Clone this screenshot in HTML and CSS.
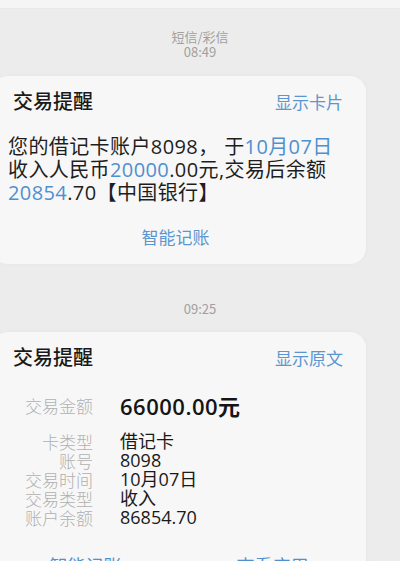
FILE: index.html
```html
<!DOCTYPE html>
<html lang="zh-CN">
<head>
<meta charset="utf-8">
<link rel="stylesheet" href="styles.css">
</head>
<body>
<div class="topbar"></div>
<div class="stamp stamp-first">
  <div>短信/彩信</div>
  <div>08:49</div>
</div>
<section class="card card-first">
  <header class="card-head">
    <h2 class="card-title">交易提醒</h2>
    <span class="card-link">显示卡片</span>
  </header>
  <p class="msg">您的借记卡账户8098， 于<span class="hl">10月07日</span><br>收入人民币<span class="hl">20000</span>.00元,交易后余额<br><span class="hl">20854</span>.70【中国银行】</p>
  <div class="single-action">智能记账</div>
</section>
<div class="stamp stamp-second">
  <div>09:25</div>
</div>
<section class="card card-second">
  <header class="card-head">
    <h2 class="card-title">交易提醒</h2>
    <span class="card-link">显示原文</span>
  </header>
  <div class="amount-row">
    <span class="label">交易金额</span>
    <span class="amount">66000.00元</span>
  </div>
  <dl class="details">
    <dt class="label">卡类型</dt><dd class="value">借记卡</dd>
    <dt class="label">账号</dt><dd class="value">8098</dd>
    <dt class="label">交易时间</dt><dd class="value">10月07日</dd>
    <dt class="label">交易类型</dt><dd class="value">收入</dd>
    <dt class="label">账户余额</dt><dd class="value">86854.70</dd>
  </dl>
  <div class="actions">
    <span class="action">智能记账</span>
    <span class="action">查看应用</span>
  </div>
</section>
</body>
</html>
```
FILE: styles.css
```css
html, body {
  margin: 0;
  padding: 0;
}
body {
  width: 400px;
  height: 561px;
  overflow: hidden;
  background: #ececec;
  font-family: "Noto Sans CJK SC", "Noto Sans", sans-serif;
  color: #1e1e1e;
}
.topbar {
  height: 8px;
  background: #f5f5f5;
  border-bottom: 1px solid #e8e8e8;
}
.stamp {
  text-align: center;
  font-size: 13px;
  line-height: 15px;
  color: #a0a0a0;
}
.stamp-first {
  margin-top: 20px;
}
.stamp-second {
  margin-top: 37px;
}
.card {
  margin-left: -8px;
  width: 374px;
  background: #f7f7f7;
  border-radius: 16px;
  box-shadow: 0 0 4px rgba(0, 0, 0, 0.03);
  box-sizing: border-box;
  padding: 13px 23px 0 16px;
}
.card-first {
  margin-top: 17px;
  height: 188px;
}
.card-second {
  margin-top: 16px;
  height: 260px;
}
.card-head {
  display: flex;
  justify-content: space-between;
  align-items: center;
  height: 24px;
}
.card-title {
  margin: 0 0 0 5px;
  font-size: 20px;
  font-weight: 500;
  line-height: 24px;
  color: #1a1a1a;
}
.card-link {
  font-size: 17px;
  color: #5b96cf;
}
.msg {
  margin: 22px 0 0;
  font-family: "Open Sans", "Noto Sans CJK SC", sans-serif;
  font-size: 20px;
  line-height: 23px;
  letter-spacing: 0.4px;
  color: #1e1e1e;
  white-space: nowrap;
}
.hl {
  color: #4f90d0;
}
.single-action {
  margin-top: 23px;
  text-align: center;
  font-size: 17px;
  line-height: 20px;
  color: #5b96cf;
}
.amount-row {
  display: flex;
  align-items: center;
  margin-top: 21px;
  height: 30px;
}
.label {
  width: 85px;
  text-align: right;
  font-size: 17px;
  color: #b0b0b0;
  font-weight: 300;
}
.amount {
  margin-left: 27px;
  font-family: "Open Sans", "Noto Sans CJK SC", sans-serif;
  font-size: 22px;
  font-weight: 600;
  letter-spacing: 0.5px;
  color: #151515;
}
.details {
  display: grid;
  grid-template-columns: 85px auto;
  column-gap: 27px;
  margin: 12px 0 0;
  line-height: 19px;
}
.details dt, .details dd {
  margin: 0;
}
.value {
  font-family: "Open Sans", "Noto Sans CJK SC", sans-serif;
  font-size: 18px;
  color: #1a1a1a;
}
.actions {
  display: flex;
  margin: 27px -23px 0 -16px;
}
.action {
  flex: 1;
  text-align: center;
  font-size: 18px;
  line-height: 22px;
  color: #4f90d0;
}
```
